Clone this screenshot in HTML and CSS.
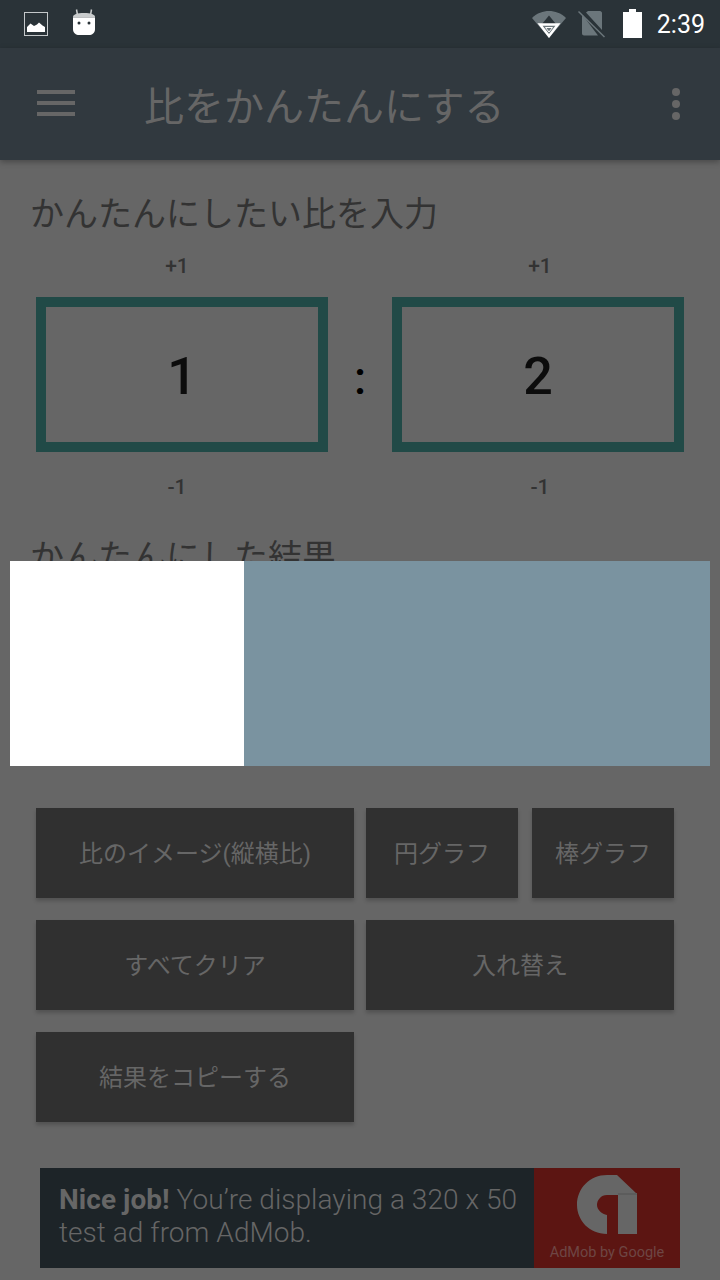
FILE: index.html
```html
<!DOCTYPE html>
<html lang="ja">
<head>
    <meta charset="UTF-8">
    <meta name="viewport" content="width=device-width, initial-scale=1.0">
    <title>比をかんたんにする</title>
    <link rel="stylesheet" href="styles.css">
</head>
<body>
    <div class="status-bar">
        <div class="status-left">
            <svg class="icon-picture" viewBox="0 0 24 24">
                <rect x="0.5" y="0.5" width="23" height="23" fill="none" stroke="#c4c8ca" stroke-width="1"/>
                <path d="M3 20V15L6.5 11.5L10 14L13 12.5L15 10.5L18.5 13.5L21 15V20Z" fill="#fff"/>
            </svg>
            <svg class="icon-android" viewBox="0 0 24 28">
                <path d="M5.5 7L4.5 1.500M18.500 7L19.500 1.500" stroke="#c9cccd" stroke-width="1.500" fill="none"/>
                <path d="M1 9C1 6.500 5 5 12 5S23 6.500 23 9V9.500H1Z" fill="#c9cccd"/>
                <path d="M1 9.500H23V21C23 25 20 27 17 27H7C4 27 1 25 1 21Z" fill="#fff"/>
                <circle cx="7" cy="15" r="1.500" fill="#2a3338"/>
                <circle cx="17" cy="15" r="1.500" fill="#2a3338"/>
            </svg>
        </div>
        <div class="status-right">
            <svg class="icon-wifi" viewBox="0 0 34 28">
                <path d="M0 8C5 3 11 1 17 1S29 3 34 8L17 28Z" fill="#6b767b"/>
                <path d="M17 5.500L10 14H24Z" fill="#2a3338"/>
                <path d="M8 14.500H26L17 26Z" fill="none" stroke="#fff" stroke-width="2.500"/>
                <path d="M13.500 17.500H20.500L17 22Z" fill="none" stroke="#fff" stroke-width="1"/>
            </svg>
            <svg class="icon-sim" viewBox="0 0 27 28">
                <path d="M10 1H22C23 1 24 2 24 3V20L8 2.500ZM5 5.500L20 25.500H6C5 25.500 4 24.500 4 23.500V6.500Z" fill="#6b767b"/>
                <path d="M0.500 1.500L26.500 27" stroke="#6b767b" stroke-width="1.500"/>
            </svg>
            <svg class="icon-battery" viewBox="0 0 19 30">
                <path d="M6 0H13V3H19V29H0V3H6Z" fill="#fff"/>
            </svg>
            <span class="clock">2:39</span>
        </div>
    </div>

    <header class="app-bar">
        <div class="menu-icon"><span></span><span></span><span></span></div>
        <h1 class="app-title">比をかんたんにする</h1>
        <div class="more-icon"><span></span><span></span><span></span></div>
    </header>

    <main class="content">
        <h2 class="section-title">かんたんにしたい比を入力</h2>

        <div class="ratio-grid">
            <div class="step step-a">+1</div>
            <div class="step step-b">+1</div>
            <div class="ratio-box">1</div>
            <div class="colon">:</div>
            <div class="ratio-box">2</div>
            <div class="step step-a step-down">-1</div>
            <div class="step step-b step-down">-1</div>
        </div>

        <h2 class="section-title result-title">かんたんにした結果</h2>

        <div class="button-rows">
            <div class="button-row">
                <button class="action wide">比のイメージ(縦横比)</button>
                <button class="action mid">円グラフ</button>
                <button class="action small">棒グラフ</button>
            </div>
            <div class="button-row">
                <button class="action wide">すべてクリア</button>
                <button class="action half">入れ替え</button>
            </div>
            <div class="button-row">
                <button class="action wide">結果をコピーする</button>
            </div>
        </div>

        <div class="ad-banner">
            <div class="ad-text">
                <div><b>Nice job!</b> You’re displaying a 320 x 50</div>
                <div>test ad from AdMob.</div>
            </div>
            <div class="ad-logo">
                <svg viewBox="0 0 60 59">
                    <path d="M30 0H40L60 19V59H41V20H30C24 20 20 25 20 30C20 35 25 39 30 40V59C12 59 0 45 0 30C0 13 13 0 30 0Z" fill="#666"/>
                    <path d="M41 18H60V20H41Z" fill="#5c5c5c"/>
                </svg>
                <span>AdMob by Google</span>
            </div>
        </div>
    </main>

    <!-- 結果ダイアログ -->
    <div class="result-dialog">
        <div class="dialog-left"></div>
        <div class="dialog-right"></div>
    </div>
</body>
</html>
```

FILE: styles.css
```css
* {
    margin: 0;
    padding: 0;
    box-sizing: border-box;
}

body {
    position: relative;
    width: 720px;
    height: 1280px;
    overflow: hidden;
    background: #666;
    font-family: "Noto Sans CJK JP", Roboto, sans-serif;
}

/* ステータスバー */
.status-bar {
    height: 48px;
    background: #2a3338;
    display: flex;
    justify-content: space-between;
    align-items: center;
    padding: 0 15px 0 24px;
}

.status-left,
.status-right {
    display: flex;
    align-items: center;
}

.icon-picture {
    width: 24px;
    height: 24px;
}

.icon-android {
    width: 24px;
    height: 28px;
    margin-left: 24px;
    margin-top: -4px;
}

.icon-wifi {
    width: 34px;
    height: 28px;
}

.icon-sim {
    width: 27px;
    height: 28px;
    margin-left: 12px;
}

.icon-battery {
    width: 19px;
    height: 30px;
    margin-left: 18px;
}

.clock {
    margin-left: 15px;
    color: #fff;
    font-family: Roboto, sans-serif;
    font-size: 25px;
}

/* アプリバー */
.app-bar {
    position: relative;
    height: 112px;
    background: #31393f;
    box-shadow: 0 2px 6px rgba(0, 0, 0, 0.3);
    display: flex;
    align-items: center;
    padding: 0 36px 0 37px;
}

.menu-icon {
    width: 38px;
    margin-top: -2px;
    display: flex;
    flex-direction: column;
    gap: 7px;
}

.menu-icon span {
    height: 4px;
    background: #666;
}

.app-title {
    margin-left: 69px;
    flex: 1;
    color: #666;
    font-size: 40px;
    font-weight: 400;
    line-height: 1;
}

.more-icon {
    display: flex;
    flex-direction: column;
    gap: 4px;
    margin-right: 4px;
}

.more-icon span {
    width: 8px;
    height: 8px;
    border-radius: 50%;
    background: #666;
}

/* メイン */
.content {
    padding: 29px 0 0;
}

.section-title {
    margin-left: 30px;
    color: #333;
    font-size: 34px;
    font-weight: 400;
    line-height: 46px;
}

.ratio-grid {
    display: grid;
    grid-template-columns: 292px 64px 292px;
    grid-template-rows: 60px 155px 70px;
    margin: 0 0 0 36px;
    padding-top: 2px;
}

.step {
    color: #333;
    font-family: Roboto, sans-serif;
    font-size: 21px;
    font-weight: 500;
    display: flex;
    align-items: center;
    justify-content: center;
}

.step-a {
    grid-column: 1;
    margin-right: 10px;
    padding-bottom: 2px;
}

.step-b {
    grid-column: 3;
    margin-left: 4px;
    padding-bottom: 2px;
}

.step-down {
    grid-row: 3;
    padding-bottom: 0;
}

.ratio-box {
    grid-row: 2;
    padding-top: 4px;
    border: 10px solid #214a47;
    color: #0c0c0c;
    font-family: Roboto, sans-serif;
    font-size: 52px;
    font-weight: 500;
    display: flex;
    align-items: center;
    justify-content: center;
}

.colon {
    grid-row: 2;
    padding-top: 6px;
    color: #000;
    font-family: Roboto, sans-serif;
    font-size: 46px;
    font-weight: 500;
    display: flex;
    align-items: center;
    justify-content: center;
}

.result-title {
    margin-top: 10px;
}

/* ボタン */
.button-rows {
    margin: 230px 0 0 36px;
    display: flex;
    flex-direction: column;
    gap: 22px;
}

.button-row {
    display: flex;
    gap: 12px;
}

.action {
    height: 90px;
    padding-bottom: 4px;
    border: 0;
    background: #303030;
    color: #666;
    font-family: Roboto, "Noto Sans CJK JP", sans-serif;
    font-size: 24px;
    font-weight: 400;
    box-shadow: 0 3px 4px rgba(0, 0, 0, 0.2);
}

.wide {
    width: 318px;
}

.mid {
    width: 152px;
}

.small {
    width: 142px;
    margin-left: 2px;
}

.half {
    width: 308px;
}

/* 広告 */
.ad-banner {
    margin: 46px 0 0 40px;
    width: 640px;
    height: 100px;
    background: #1d2428;
    display: flex;
}

.ad-text {
    width: 494px;
    padding: 15px 0 0 19px;
    color: #666;
    font-family: Roboto, sans-serif;
    font-size: 28px;
    font-weight: 300;
    line-height: 33px;
    letter-spacing: 0.05px;
    white-space: nowrap;
}

.ad-text b {
    font-weight: 700;
}

.ad-logo {
    width: 146px;
    background: #5c1512;
    display: flex;
    flex-direction: column;
    align-items: center;
    padding-top: 7px;
}

.ad-logo svg {
    width: 60px;
    height: 59px;
}

.ad-logo span {
    margin-top: 10px;
    color: #6e4644;
    font-family: Roboto, sans-serif;
    font-size: 14.500px;
    white-space: nowrap;
}

/* ダイアログは画面の上に重ねる */
.result-dialog {
    position: absolute;
    left: 10px;
    top: 561px;
    width: 700px;
    height: 205px;
    display: flex;
}

.dialog-left {
    width: 234px;
    background: #fff;
}

.dialog-right {
    flex: 1;
    background: #7a93a0;
}
```
